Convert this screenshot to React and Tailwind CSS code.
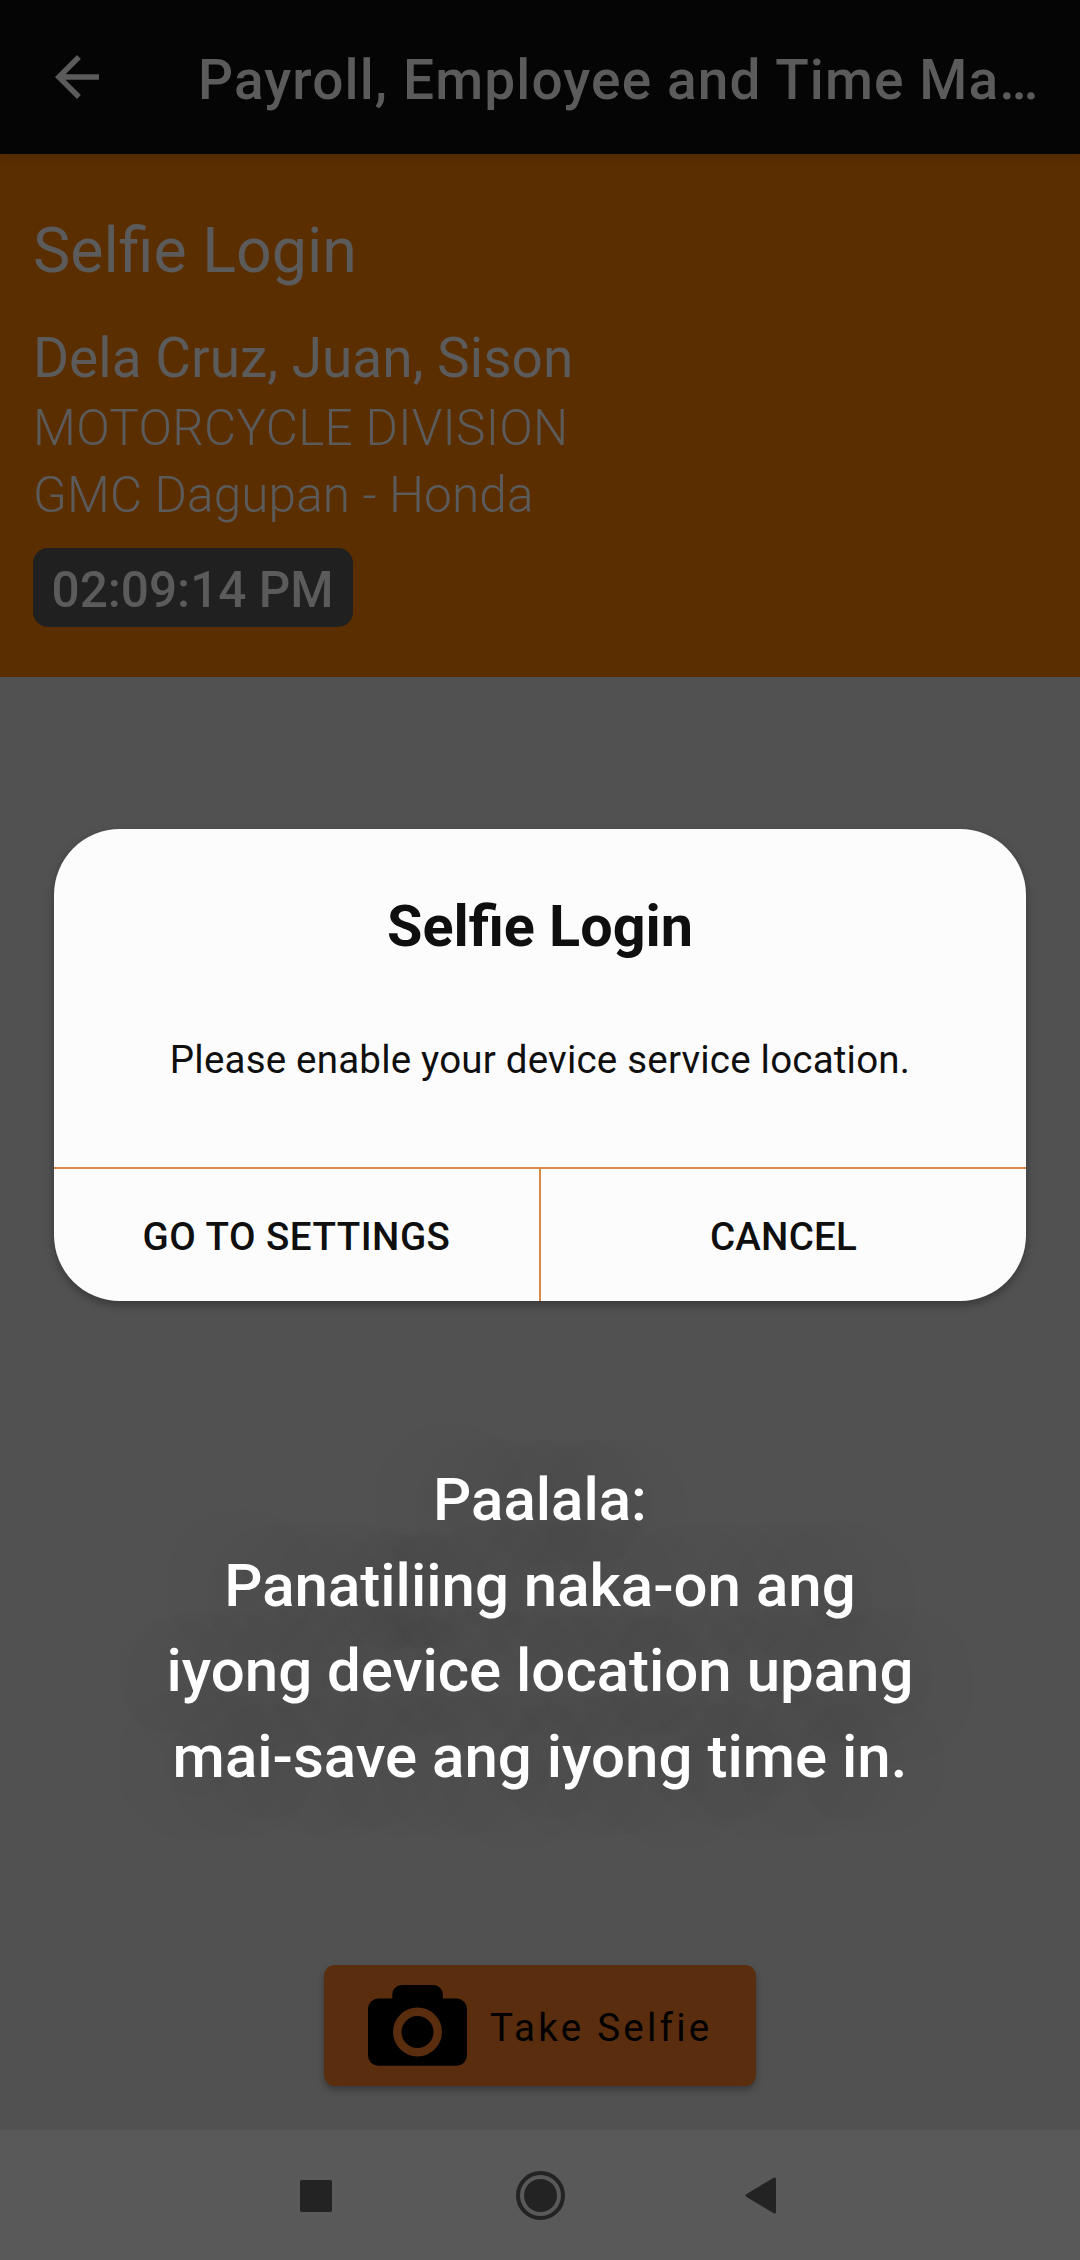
const EMPLOYEE = {
  name: "Dela Cruz, Juan, Sison",
  division: "MOTORCYCLE DIVISION",
  branch: "GMC Dagupan - Honda",
};

function BackArrow() {
  return (
    <svg className="ml-[44px] size-[66px] shrink-0" viewBox="0 0 24 24" fill="currentColor">
      <path d="M20 11H7.83l5.59-5.59L12 4l-8 8 8 8 1.41-1.41L7.83 13H20v-2z" />
    </svg>
  );
}

function Camera() {
  return (
    <svg className="h-[81px] w-[99px] shrink-0" viewBox="0 0 99 81">
      <rect x="24.3" y="0" width="50.5" height="40" rx="9.5" fill="#000" />
      <rect x="0" y="13.4" width="99" height="67.4" rx="10.5" fill="#000" />
      <circle cx="49.5" cy="47" r="20.2" fill="none" stroke="#592d0d" strokeWidth="8.4" />
    </svg>
  );
}

function AppBar() {
  return (
    <header className="relative z-10 flex h-[154px] items-center bg-[#050505] text-[#5b5b5b] shadow-[0_3px_8px_rgba(0,0,0,0.12)]">
      <BackArrow />
      <h1 className="ml-[88px] pt-[6px] text-[55px] leading-[64px] font-medium tracking-[1.12px] whitespace-nowrap">
        Payroll, Employee and Time Ma…
      </h1>
    </header>
  );
}

function EmployeeBanner() {
  return (
    <section className="flex h-[523px] flex-col items-start bg-[#5b2e00] px-[33px] pt-[60px] text-[#5b5b5b]">
      <h2 className="text-[62.7px] leading-[73px]">Selfie Login</h2>
      <p className="mt-[39px] text-[55px] leading-[64px]">{EMPLOYEE.name}</p>
      <p className="mt-[5px] text-[49.5px] leading-[67px] font-light tracking-[0.3px]">{EMPLOYEE.division}</p>
      <p className="text-[49.5px] leading-[67px] font-light tracking-[0.13px]">{EMPLOYEE.branch}</p>
      <div className="mt-[19px] flex h-[79px] w-[320px] items-center rounded-[15px] bg-[#202020] pt-[5px] pl-[18.5px] text-[49.5px] leading-[58px] font-medium whitespace-nowrap">
        02:09:14 PM
      </div>
    </section>
  );
}

function Dialog() {
  return (
    <div className="absolute inset-0 z-20 flex items-center justify-center">
      <div className="flex h-[472px] w-[972px] flex-col overflow-hidden rounded-[66px] bg-[#fcfcfc] text-center text-[#0f0f0f] shadow-[0_4px_10px_rgba(0,0,0,0.3)]">
        <div className="h-[338px] pt-[64px]">
          <h3 className="text-[57.5px] leading-[67px] font-bold">Selfie Login</h3>
          <p className="mt-[75px] text-[38.5px] leading-[50px] tracking-[0.2px]">
            Please enable your device service location.
          </p>
        </div>
        <div className="flex grow border-t-2 border-[#d68a4a] text-[38.5px] leading-[46px] font-medium">
          <button className="w-[485px] pt-[4px] tracking-[0.5px]">GO TO SETTINGS</button>
          <div className="w-[2px] bg-[#d68a4a]" />
          <button className="w-[485px] pt-[4px] tracking-[0.23px]">CANCEL</button>
        </div>
      </div>
    </div>
  );
}

function NavBar() {
  return (
    <nav className="flex h-[130px] items-center bg-[#595959] pt-px pl-[300px] text-[#232323]">
      <div className="size-[32px] rounded-[2px] bg-[#232323]" />
      <svg className="ml-[184px] size-[49px]" viewBox="0 0 49 49">
        <circle cx="24.5" cy="24.5" r="22.5" fill="none" stroke="currentColor" strokeWidth="4" />
        <circle cx="24.5" cy="24.5" r="16.5" fill="currentColor" />
      </svg>
      <svg className="ml-[179.5px] h-[37px] w-[32px]" viewBox="0 0 32 37">
        <path d="M2 18.5 29.5 2v33z" fill="currentColor" stroke="currentColor" strokeWidth="3" strokeLinejoin="round" />
      </svg>
    </nav>
  );
}

export default function App() {
  return (
    <div className="flex h-[2260px] w-[1080px] flex-col overflow-hidden bg-[#515151] font-[Roboto,sans-serif]">
      <div className="relative flex h-[2130px] flex-col">
        <AppBar />
        <EmployeeBanner />
        <main className="flex grow flex-col items-center">
          <p className="mt-[780px] h-[342px] text-center text-[60px] leading-[85.6px] font-medium whitespace-nowrap text-white [text-shadow:0_4px_75px_rgba(0,0,0,0.25)]">
            Paalala:
            <br />
            Panatiliing naka-on ang
            <br />
            iyong device location upang
            <br />
            mai-save ang iyong time in.
          </p>
          <button className="mt-[166px] flex h-[121px] w-[432px] items-center rounded-[11px] bg-[#592d0d] pl-[44px] text-black shadow-[0_4px_7px_rgba(0,0,0,0.3)]">
            <Camera />
            <span className="ml-[23px] pt-[5px] text-[38.5px] leading-[46px] tracking-[3.25px]">Take Selfie</span>
          </button>
        </main>
        <Dialog />
      </div>
      <NavBar />
    </div>
  );
}
